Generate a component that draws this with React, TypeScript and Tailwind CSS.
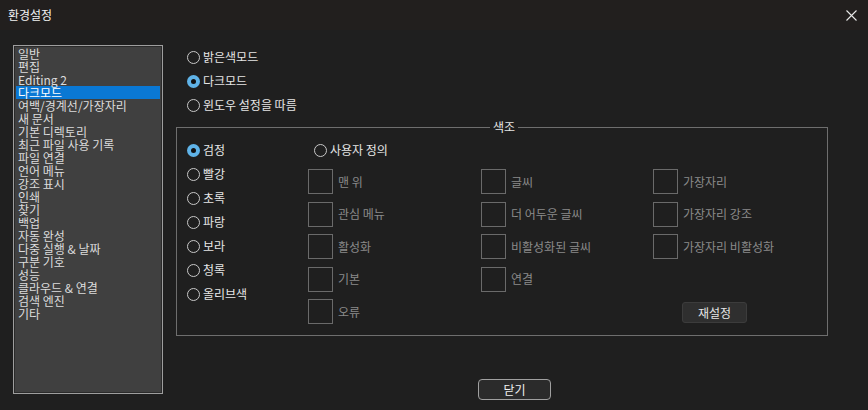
import React from "react";

const listItems = [
  "일반",
  "편집",
  "Editing 2",
  "다크모드",
  "여백/경계선/가장자리",
  "새 문서",
  "기본 디렉토리",
  "최근 파일 사용 기록",
  "파일 연결",
  "언어 메뉴",
  "강조 표시",
  "인쇄",
  "찾기",
  "백업",
  "자동 완성",
  "다중 실행 & 날짜",
  "구분 기호",
  "성능",
  "클라우드 & 연결",
  "검색 엔진",
  "기타",
];

function Radio({ checked, label }: { checked?: boolean; label: string }) {
  return (
    <div className="flex items-center h-[24px]">
      {checked ? (
        <div className="w-[13px] h-[13px] rounded-full bg-[#5fb3e8] flex items-center justify-center shrink-0">
          <div className="w-[5px] h-[5px] rounded-full bg-[#111]" />
        </div>
      ) : (
        <div className="w-[13px] h-[13px] rounded-full border border-[#c8c8c8] shrink-0" />
      )}
      <span className="ml-[3px] text-[12px] leading-[14px] text-[#e6e6e6]">{label}</span>
    </div>
  );
}

function Swatch({ label }: { label: string }) {
  return (
    <div className="flex items-center h-[25px]">
      <div className="w-[25px] h-[25px] border border-[#6a6a6a] shrink-0" />
      <span className="ml-[5px] text-[12px] text-[#8a8a8a]">{label}</span>
    </div>
  );
}

export default function App() {
  return (
    <div
      className="w-[868px] h-[410px] bg-[#1f1f1f] overflow-hidden flex flex-col"
      style={{ fontFamily: '"Noto Sans CJK KR", "Noto Sans", sans-serif' }}
    >
      {/* title bar */}
      <div className="h-[30px] bg-[#221f1e] flex items-center justify-between pl-[8px] pr-[10px] shrink-0">
        <span className="text-[12px] text-[#f2f2f2]">환경설정</span>
        <svg width="11" height="11" viewBox="0 0 11 11" className="mr-[1px]">
          <path d="M0.5 0.5 L10.5 10.5 M10.5 0.5 L0.5 10.5" stroke="#e8e8e8" strokeWidth="1.1" />
        </svg>
      </div>

      <div className="flex pt-[15px]">
        {/* list */}
        <div className="ml-[13px] w-[150px] h-[349px] border border-[#9e9e9e] shrink-0">
          <div className="w-full h-full border border-[#2a2a2a] bg-[#404040] px-[1px]">
            {listItems.map((it) => (
              <div
                key={it}
                className={
                  "h-[13px] leading-[13px] text-[12px] px-[2px] whitespace-nowrap " +
                  (it === "다크모드" ? "bg-[#0a78d4] text-white" : "text-[#dcdcdc]")
                }
              >
                {it}
              </div>
            ))}
          </div>
        </div>

        {/* right column */}
        <div className="ml-[13px] w-[652px] flex flex-col">
          <div className="pl-[11px]">
            <Radio label="밝은색모드" />
            <Radio checked label="다크모드" />
            <Radio label="윈도우 설정을 따름" />
          </div>

          <div className="relative mt-[10px] h-[209px] border border-[#6e6e6e] flex pt-[10px]">
            <span className="absolute top-[-9px] left-[313px] px-[3px] bg-[#1f1f1f] text-[12px] leading-[16px] text-[#e6e6e6]">
              색조
            </span>
            <div className="pl-[10px] w-[131px] flex flex-col">
              <Radio checked label="검정" />
              <Radio label="빨강" />
              <Radio label="초록" />
              <Radio label="파랑" />
              <Radio label="보라" />
              <Radio label="청록" />
              <Radio label="올리브색" />
            </div>
            <div className="flex flex-col">
              <div className="pl-[6px]">
                <Radio label="사용자 정의" />
              </div>
              <div className="grid grid-cols-[173px_172px_160px] gap-y-[7.5px] mt-[7px]">
                <Swatch label="맨 위" />
                <Swatch label="글씨" />
                <Swatch label="가장자리" />
                <Swatch label="관심 메뉴" />
                <Swatch label="더 어두운 글씨" />
                <Swatch label="가장자리 강조" />
                <Swatch label="활성화" />
                <Swatch label="비활성화된 글씨" />
                <Swatch label="가장자리 비활성화" />
                <Swatch label="기본" />
                <Swatch label="연결" />
                <div />
                <Swatch label="오류" />
                <div />
                <div className="flex items-center h-[25px] pl-[29px] pt-[2px]">
                  <div className="w-[65px] h-[21px] rounded-[3px] bg-[#2f2f2f] border border-[#3c3c3c] flex items-center justify-center text-[12px] text-[#e6e6e6]">
                    재설정
                  </div>
                </div>
              </div>
            </div>
          </div>

          <div className="mt-[43px] ml-[302px] w-[73px] h-[21px] rounded-[4px] border border-[#a0a0a0] bg-[#2b2b2b] flex items-center justify-center text-[12px] text-[#f0f0f0]">
            닫기
          </div>
        </div>
      </div>
    </div>
  );
}
